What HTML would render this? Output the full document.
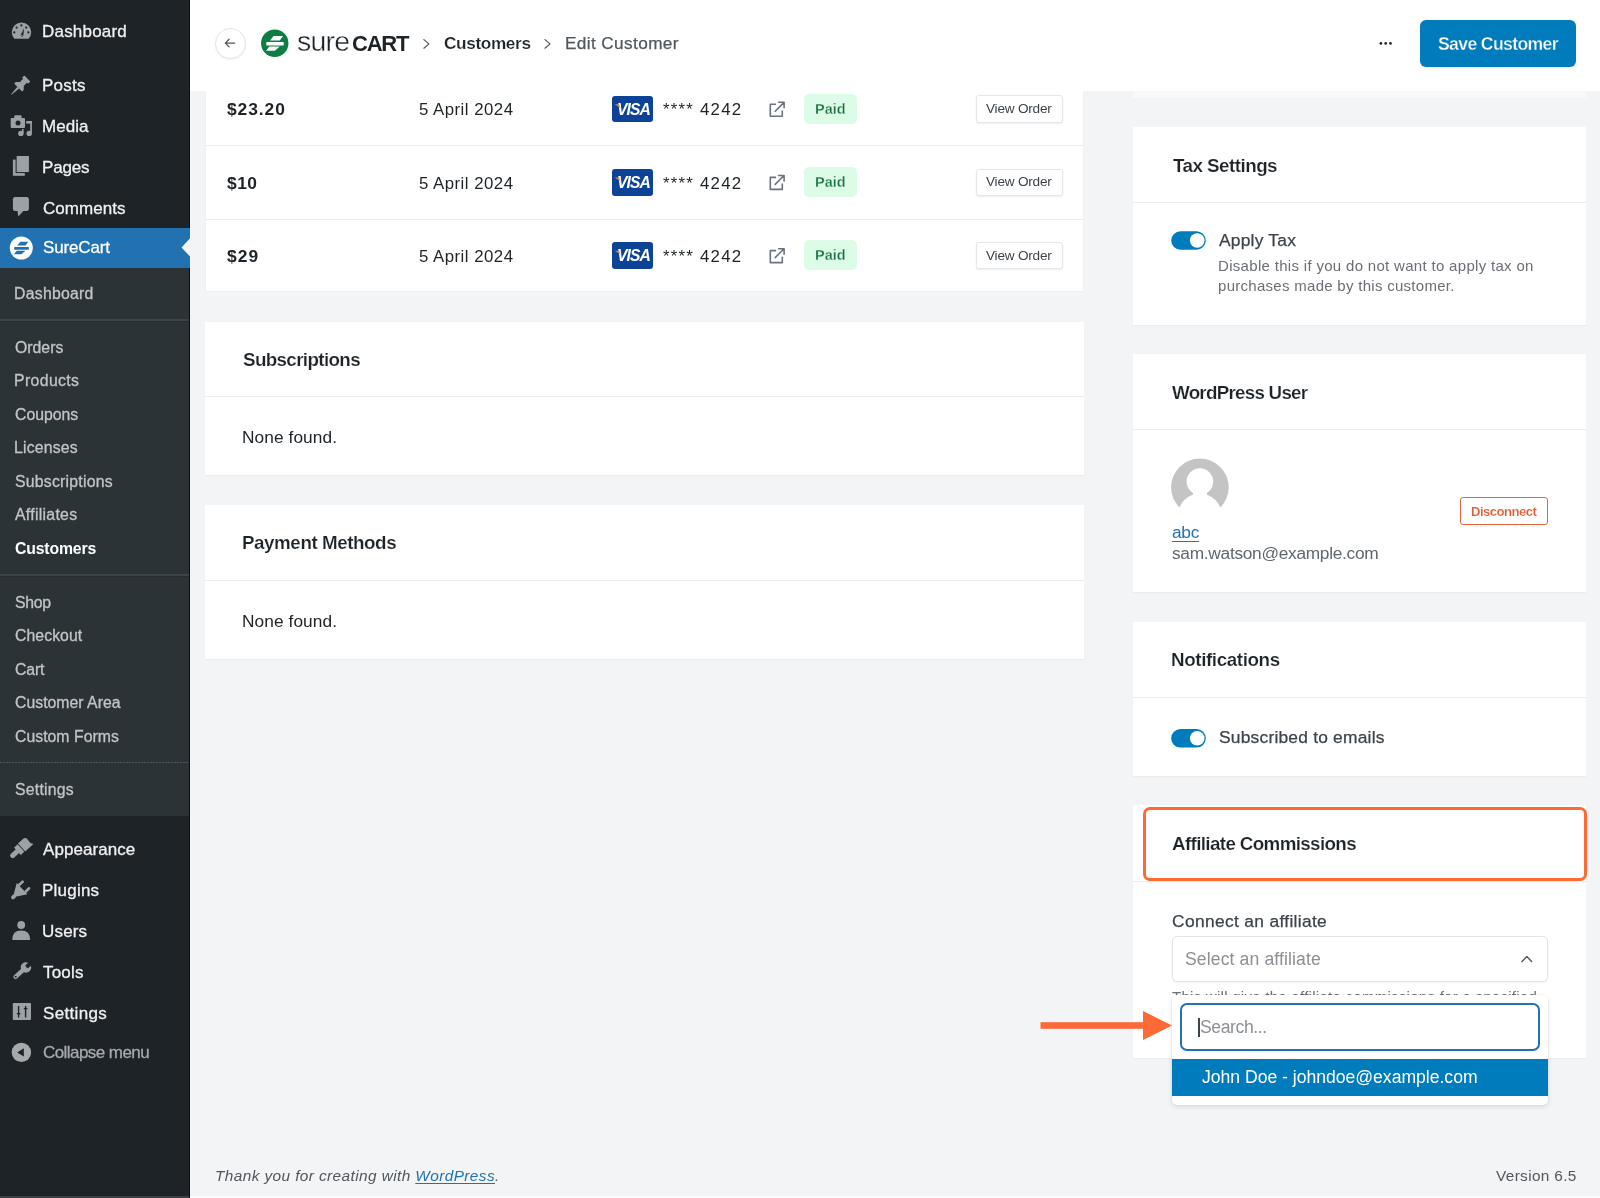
<!DOCTYPE html>
<html><head><meta charset="utf-8">
<style>
html,body{margin:0;padding:0}
body{width:1600px;height:1198px;overflow:hidden;background:#f3f4f6;position:relative;font-family:"Liberation Sans",sans-serif}
.b{position:absolute;box-sizing:border-box}
.t{position:absolute;white-space:nowrap;line-height:0;font-family:"Liberation Sans",sans-serif;will-change:transform}
.card{position:absolute;background:#fff;box-sizing:border-box;box-shadow:0 1px 1px rgba(0,0,0,0.03)}
.sep{position:absolute;height:1px;background:#ededee}
</style></head><body>
<!-- sidebar -->
<div class="b" style="left:0;top:0;width:189px;height:1198px;background:#1d2327"></div>
<div class="b" style="left:188.6px;top:0;width:1.6px;height:1198px;background:#0b0d0f"></div>
<div class="b" style="left:0;top:1196px;width:188.6px;height:2px;background:#3a4046"></div>
<div class="b" style="left:190.2px;top:1196px;width:1410px;height:2px;background:#fbfbfc"></div>

<div class="b" style="left:0;top:268px;width:189px;height:548px;background:#2c3336"></div>
<div class="b" style="left:0;top:319px;width:189px;height:2px;background:#3c434a"></div>
<div class="b" style="left:0;top:321px;width:189px;height:1px;background:#262b2f"></div>
<div class="b" style="left:0;top:574px;width:189px;height:2px;background:#3c434a"></div>
<div class="b" style="left:0;top:576px;width:189px;height:1px;background:#262b2f"></div>
<div class="b" style="left:0;top:762px;width:189px;height:1px;background:repeating-linear-gradient(90deg,#4f565c 0 1.6px,transparent 1.6px 3px)"></div>

<div class="b" style="left:0;top:228px;width:190.2px;height:40px;background:#2271b1"></div>
<!-- header -->
<div class="b" style="left:190px;top:0;width:1410px;height:91px;background:#fff"></div>

<!-- cards left -->
<div class="card" style="left:205px;top:91px;width:879px;height:201px;box-shadow:none;border-left:1px solid #eef0f2;border-right:1px solid #eef0f2;border-bottom:1px solid #eef0f2"></div>
<div class="sep" style="left:205px;top:145px;width:879px"></div>
<div class="sep" style="left:205px;top:219px;width:879px"></div>

<div class="card" style="left:205px;top:322px;width:879px;height:153px"></div>
<div class="sep" style="left:205px;top:396px;width:879px"></div>
<div class="card" style="left:205px;top:505px;width:879px;height:154px"></div>
<div class="sep" style="left:205px;top:580px;width:879px"></div>

<!-- cards right -->
<div class="b" style="left:1133px;top:91px;width:453px;height:7px;background:#f8f9fa"></div>
<div class="card" style="left:1133px;top:127px;width:453px;height:198px"></div>
<div class="sep" style="left:1133px;top:202px;width:453px"></div>
<div class="card" style="left:1133px;top:354px;width:453px;height:238px"></div>
<div class="sep" style="left:1133px;top:429px;width:453px"></div>
<div class="card" style="left:1133px;top:622px;width:453px;height:154px"></div>
<div class="sep" style="left:1133px;top:697px;width:453px"></div>
<div class="card" style="left:1133px;top:805px;width:453px;height:253px"></div>
<div class="sep" style="left:1133px;top:881px;width:453px"></div>

<!-- header elements -->
<div class="b" style="left:214.5px;top:27.5px;width:31px;height:31px;border-radius:50%;border:1px solid #e2e4e7;box-shadow:0 1px 2px rgba(0,0,0,.06);background:#fff"></div>
<div class="b" style="left:1420px;top:20px;width:156px;height:47px;border-radius:6px;background:#007cbd;box-shadow:0 1px 2px rgba(0,0,0,.08)"></div>

<!-- table elements -->
<div class="b" style="left:804px;top:93.7px;width:52.5px;height:30px;border-radius:5px;background:#dcfce7"></div>
<div class="b" style="left:976px;top:95.3px;width:86.5px;height:27.8px;border-radius:3px;border:1px solid #e6e7ea;background:#fff;box-shadow:0 1px 2px rgba(0,0,0,.08)"></div>
<div class="b" style="left:611.6px;top:96.1px;width:41.8px;height:26.4px;border-radius:3px;background:#0d4397"></div>
<div class="b" style="left:804px;top:167.0px;width:52.5px;height:30px;border-radius:5px;background:#dcfce7"></div>
<div class="b" style="left:976px;top:168.5px;width:86.5px;height:27.8px;border-radius:3px;border:1px solid #e6e7ea;background:#fff;box-shadow:0 1px 2px rgba(0,0,0,.08)"></div>
<div class="b" style="left:611.6px;top:169.2px;width:41.8px;height:26.4px;border-radius:3px;background:#0d4397"></div>
<div class="b" style="left:804px;top:240.3px;width:52.5px;height:30px;border-radius:5px;background:#dcfce7"></div>
<div class="b" style="left:976px;top:241.7px;width:86.5px;height:27.8px;border-radius:3px;border:1px solid #e6e7ea;background:#fff;box-shadow:0 1px 2px rgba(0,0,0,.08)"></div>
<div class="b" style="left:611.6px;top:242.3px;width:41.8px;height:26.4px;border-radius:3px;background:#0d4397"></div>

<!-- right column elements -->
<div class="b" style="left:1459.8px;top:497.4px;width:88px;height:28px;border-radius:3px;border:1px solid #e8643a;background:#fff"></div>
<div class="b" style="left:1143px;top:807px;width:444px;height:74px;border-radius:7px;border:3px solid #fd6a35"></div>
<div class="b" style="left:1172px;top:936px;width:375.5px;height:46px;border-radius:5px;border:1px solid #e2e4e7;background:#fff;box-shadow:0 1px 2px rgba(0,0,0,.05)"></div>

<div class="t" style="left:42.20px;top:31.60px;font-size:17px;color:#f0f0f1;font-weight:normal;font-style:normal;letter-spacing:0.199px;-webkit-text-stroke:0.3px currentColor;">Dashboard</div>
<div class="t" style="left:42.20px;top:85.60px;font-size:17px;color:#f0f0f1;font-weight:normal;font-style:normal;letter-spacing:0.246px;-webkit-text-stroke:0.3px currentColor;">Posts</div>
<div class="t" style="left:42.20px;top:126.60px;font-size:17px;color:#f0f0f1;font-weight:normal;font-style:normal;letter-spacing:0.038px;-webkit-text-stroke:0.3px currentColor;">Media</div>
<div class="t" style="left:42.20px;top:167.60px;font-size:17px;color:#f0f0f1;font-weight:normal;font-style:normal;letter-spacing:-0.176px;-webkit-text-stroke:0.3px currentColor;">Pages</div>
<div class="t" style="left:43.20px;top:208.60px;font-size:17px;color:#f0f0f1;font-weight:normal;font-style:normal;letter-spacing:0.045px;-webkit-text-stroke:0.3px currentColor;">Comments</div>
<div class="t" style="left:43.20px;top:247.60px;font-size:17px;color:#ffffff;font-weight:normal;font-style:normal;letter-spacing:-0.143px;-webkit-text-stroke:0.3px currentColor;">SureCart</div>
<div class="t" style="left:43.20px;top:849.60px;font-size:17px;color:#f0f0f1;font-weight:normal;font-style:normal;letter-spacing:0.064px;-webkit-text-stroke:0.3px currentColor;">Appearance</div>
<div class="t" style="left:42.20px;top:890.60px;font-size:17px;color:#f0f0f1;font-weight:normal;font-style:normal;letter-spacing:0.224px;-webkit-text-stroke:0.3px currentColor;">Plugins</div>
<div class="t" style="left:42.20px;top:931.60px;font-size:17px;color:#f0f0f1;font-weight:normal;font-style:normal;letter-spacing:0.177px;-webkit-text-stroke:0.3px currentColor;">Users</div>
<div class="t" style="left:43.20px;top:972.60px;font-size:17px;color:#f0f0f1;font-weight:normal;font-style:normal;letter-spacing:0.203px;-webkit-text-stroke:0.3px currentColor;">Tools</div>
<div class="t" style="left:43.20px;top:1013.60px;font-size:17px;color:#f0f0f1;font-weight:normal;font-style:normal;letter-spacing:0.325px;-webkit-text-stroke:0.3px currentColor;">Settings</div>
<div class="t" style="left:43.20px;top:1052.60px;font-size:17px;color:#a7aaad;font-weight:normal;font-style:normal;letter-spacing:-0.562px;-webkit-text-stroke:0.3px currentColor;">Collapse menu</div>
<div class="t" style="left:13.80px;top:293.60px;font-size:15.8px;color:#c3c4c7;font-weight:normal;font-style:normal;letter-spacing:0.263px;-webkit-text-stroke:0.3px currentColor;">Dashboard</div>
<div class="t" style="left:14.80px;top:347.60px;font-size:15.8px;color:#c3c4c7;font-weight:normal;font-style:normal;letter-spacing:0.004px;-webkit-text-stroke:0.3px currentColor;">Orders</div>
<div class="t" style="left:13.80px;top:380.60px;font-size:15.8px;color:#c3c4c7;font-weight:normal;font-style:normal;letter-spacing:0.380px;-webkit-text-stroke:0.3px currentColor;">Products</div>
<div class="t" style="left:14.80px;top:414.60px;font-size:15.8px;color:#c3c4c7;font-weight:normal;font-style:normal;letter-spacing:-0.023px;-webkit-text-stroke:0.3px currentColor;">Coupons</div>
<div class="t" style="left:13.80px;top:447.60px;font-size:15.8px;color:#c3c4c7;font-weight:normal;font-style:normal;letter-spacing:0.179px;-webkit-text-stroke:0.3px currentColor;">Licenses</div>
<div class="t" style="left:14.80px;top:481.60px;font-size:15.8px;color:#c3c4c7;font-weight:normal;font-style:normal;letter-spacing:0.231px;-webkit-text-stroke:0.3px currentColor;">Subscriptions</div>
<div class="t" style="left:14.80px;top:514.60px;font-size:15.8px;color:#c3c4c7;font-weight:normal;font-style:normal;letter-spacing:0.298px;-webkit-text-stroke:0.3px currentColor;">Affiliates</div>
<div class="t" style="left:14.80px;top:548.60px;font-size:15.8px;color:#ffffff;font-weight:bold;font-style:normal;letter-spacing:-0.166px;">Customers</div>
<div class="t" style="left:14.80px;top:602.60px;font-size:15.8px;color:#c3c4c7;font-weight:normal;font-style:normal;letter-spacing:-0.302px;-webkit-text-stroke:0.3px currentColor;">Shop</div>
<div class="t" style="left:14.80px;top:635.60px;font-size:15.8px;color:#c3c4c7;font-weight:normal;font-style:normal;letter-spacing:0.065px;-webkit-text-stroke:0.3px currentColor;">Checkout</div>
<div class="t" style="left:14.80px;top:669.60px;font-size:15.8px;color:#c3c4c7;font-weight:normal;font-style:normal;letter-spacing:-0.151px;-webkit-text-stroke:0.3px currentColor;">Cart</div>
<div class="t" style="left:14.80px;top:702.60px;font-size:15.8px;color:#c3c4c7;font-weight:normal;font-style:normal;letter-spacing:0.013px;-webkit-text-stroke:0.3px currentColor;">Customer Area</div>
<div class="t" style="left:14.80px;top:736.60px;font-size:15.8px;color:#c3c4c7;font-weight:normal;font-style:normal;letter-spacing:0.021px;-webkit-text-stroke:0.3px currentColor;">Custom Forms</div>
<div class="t" style="left:14.80px;top:789.60px;font-size:15.8px;color:#c3c4c7;font-weight:normal;font-style:normal;letter-spacing:0.231px;-webkit-text-stroke:0.3px currentColor;">Settings</div>
<div class="t" style="left:444.00px;top:43.10px;font-size:17.2px;color:#1d2327;font-weight:bold;font-style:normal;letter-spacing:-0.353px;-webkit-text-stroke:0.18px #fff;">Customers</div>
<div class="t" style="left:564.80px;top:43.10px;font-size:17.2px;color:#50575e;font-weight:normal;font-style:normal;letter-spacing:0.386px;-webkit-text-stroke:0.25px currentColor;">Edit Customer</div>
<div class="t" style="left:296.50px;top:41.10px;font-size:28.5px;color:#1d2327;font-weight:normal;font-style:normal;letter-spacing:-0.797px;-webkit-text-stroke:0.4px #fff;">sure</div>
<div class="t" style="left:352.00px;top:43.60px;font-size:22px;color:#1d2327;font-weight:bold;font-style:normal;letter-spacing:-1.221px;">CART</div>
<div class="t" style="left:1438.00px;top:44.10px;font-size:17.6px;color:#ffffff;font-weight:bold;font-style:normal;letter-spacing:-0.629px;-webkit-text-stroke:0.3px #007cbd;">Save Customer</div>
<div class="t" style="left:226.50px;top:109.10px;font-size:17.4px;color:#1d2327;font-weight:bold;font-style:normal;letter-spacing:0.936px;">$23.20</div>
<div class="t" style="left:419.40px;top:109.60px;font-size:16.8px;color:#1d2327;font-weight:normal;font-style:normal;letter-spacing:0.488px;">5 April 2024</div>
<div class="t" style="left:663.30px;top:109.60px;font-size:16.8px;color:#1d2327;font-weight:normal;font-style:normal;letter-spacing:1.240px;">**** 4242</div>
<div class="t" style="left:815.00px;top:109.10px;font-size:14.5px;color:#15703d;font-weight:bold;font-style:normal;letter-spacing:-0.021px;-webkit-text-stroke:0.3px #dcfce7;">Paid</div>
<div class="t" style="left:985.90px;top:108.60px;font-size:13.6px;color:#3c434a;font-weight:normal;font-style:normal;letter-spacing:-0.213px;">View Order</div>
<div class="t" style="left:226.50px;top:183.10px;font-size:17.4px;color:#1d2327;font-weight:bold;font-style:normal;letter-spacing:0.478px;">$10</div>
<div class="t" style="left:419.40px;top:183.60px;font-size:16.8px;color:#1d2327;font-weight:normal;font-style:normal;letter-spacing:0.488px;">5 April 2024</div>
<div class="t" style="left:663.30px;top:183.60px;font-size:16.8px;color:#1d2327;font-weight:normal;font-style:normal;letter-spacing:1.240px;">**** 4242</div>
<div class="t" style="left:815.00px;top:182.10px;font-size:14.5px;color:#15703d;font-weight:bold;font-style:normal;letter-spacing:-0.021px;-webkit-text-stroke:0.3px #dcfce7;">Paid</div>
<div class="t" style="left:985.90px;top:181.60px;font-size:13.6px;color:#3c434a;font-weight:normal;font-style:normal;letter-spacing:-0.213px;">View Order</div>
<div class="t" style="left:226.50px;top:256.10px;font-size:17.4px;color:#1d2327;font-weight:bold;font-style:normal;letter-spacing:1.078px;">$29</div>
<div class="t" style="left:419.40px;top:256.60px;font-size:16.8px;color:#1d2327;font-weight:normal;font-style:normal;letter-spacing:0.488px;">5 April 2024</div>
<div class="t" style="left:663.30px;top:256.60px;font-size:16.8px;color:#1d2327;font-weight:normal;font-style:normal;letter-spacing:1.240px;">**** 4242</div>
<div class="t" style="left:815.00px;top:255.10px;font-size:14.5px;color:#15703d;font-weight:bold;font-style:normal;letter-spacing:-0.021px;-webkit-text-stroke:0.3px #dcfce7;">Paid</div>
<div class="t" style="left:985.90px;top:255.60px;font-size:13.6px;color:#3c434a;font-weight:normal;font-style:normal;letter-spacing:-0.213px;">View Order</div>
<div class="t" style="left:243.10px;top:359.60px;font-size:18.8px;color:#1d2327;font-weight:bold;font-style:normal;letter-spacing:-0.636px;-webkit-text-stroke:0.18px #fff;">Subscriptions</div>
<div class="t" style="left:242.10px;top:437.10px;font-size:17.3px;color:#1d2327;font-weight:normal;font-style:normal;letter-spacing:0.079px;">None found.</div>
<div class="t" style="left:242.10px;top:542.60px;font-size:18.8px;color:#1d2327;font-weight:bold;font-style:normal;letter-spacing:-0.437px;-webkit-text-stroke:0.18px #fff;">Payment Methods</div>
<div class="t" style="left:242.10px;top:621.10px;font-size:17.3px;color:#1d2327;font-weight:normal;font-style:normal;letter-spacing:0.079px;">None found.</div>
<div class="t" style="left:1172.50px;top:165.60px;font-size:18.8px;color:#1d2327;font-weight:bold;font-style:normal;letter-spacing:-0.521px;-webkit-text-stroke:0.18px #fff;">Tax Settings</div>
<div class="t" style="left:1218.75px;top:240.10px;font-size:17.4px;color:#3c434a;font-weight:normal;font-style:normal;letter-spacing:0.225px;-webkit-text-stroke:0.25px currentColor;">Apply Tax</div>
<div class="t" style="left:1217.75px;top:265.60px;font-size:15px;color:#6b6f75;font-weight:normal;font-style:normal;letter-spacing:0.313px;">Disable this if you do not want to apply tax on</div>
<div class="t" style="left:1217.90px;top:285.60px;font-size:15px;color:#6b6f75;font-weight:normal;font-style:normal;letter-spacing:0.286px;">purchases made by this customer.</div>
<div class="t" style="left:1172.00px;top:392.60px;font-size:18.8px;color:#1d2327;font-weight:bold;font-style:normal;letter-spacing:-0.745px;-webkit-text-stroke:0.18px #fff;">WordPress User</div>
<div class="t" style="left:1172.00px;top:532.10px;font-size:17.3px;color:#2271b1;font-weight:normal;font-style:normal;letter-spacing:-0.261px;text-decoration:underline;text-underline-offset:3px;">abc</div>
<div class="t" style="left:1172.00px;top:553.10px;font-size:17.3px;color:#5f666d;font-weight:normal;font-style:normal;letter-spacing:-0.277px;">sam.watson@example.com</div>
<div class="t" style="left:1470.60px;top:511.60px;font-size:13.2px;color:#e25a30;font-weight:bold;font-style:normal;letter-spacing:-0.588px;-webkit-text-stroke:0.18px #fff;">Disconnect</div>
<div class="t" style="left:1171.30px;top:659.60px;font-size:18.8px;color:#1d2327;font-weight:bold;font-style:normal;letter-spacing:-0.382px;-webkit-text-stroke:0.18px #fff;">Notifications</div>
<div class="t" style="left:1218.50px;top:737.10px;font-size:17.4px;color:#3c434a;font-weight:normal;font-style:normal;letter-spacing:0.209px;-webkit-text-stroke:0.25px currentColor;">Subscribed to emails</div>
<div class="t" style="left:1172.20px;top:843.60px;font-size:18.8px;color:#1d2327;font-weight:bold;font-style:normal;letter-spacing:-0.630px;-webkit-text-stroke:0.18px #fff;">Affiliate Commissions</div>
<div class="t" style="left:1172.20px;top:921.10px;font-size:17.4px;color:#3c434a;font-weight:normal;font-style:normal;letter-spacing:0.327px;-webkit-text-stroke:0.25px currentColor;">Connect an affiliate</div>
<div class="t" style="left:1185.00px;top:959.10px;font-size:17.6px;color:#8c8f94;font-weight:normal;font-style:normal;letter-spacing:0.117px;">Select an affiliate</div>
<div class="t" style="left:1172.00px;top:996.60px;font-size:15px;color:#6b6f75;font-weight:normal;font-style:normal;letter-spacing:0.272px;">This will give the affiliate commissions for a specified</div>
<div class="t" style="left:214.60px;top:1175.60px;font-size:15.4px;color:#50575e;font-weight:normal;font-style:italic;letter-spacing:0.401px;">Thank you for creating with <span style="color:#2271b1;text-decoration:underline;text-underline-offset:2px">WordPress</span>.</div>
<div class="t" style="left:616.80px;top:109.60px;font-size:15.7px;color:#ffffff;font-weight:bold;font-style:italic;letter-spacing:-0.962px;">VISA</div>
<div class="t" style="left:616.80px;top:182.60px;font-size:15.7px;color:#ffffff;font-weight:bold;font-style:italic;letter-spacing:-0.962px;">VISA</div>
<div class="t" style="left:616.80px;top:255.60px;font-size:15.7px;color:#ffffff;font-weight:bold;font-style:italic;letter-spacing:-0.962px;">VISA</div>
<div class="t" style="left:1495.75px;top:1175.60px;font-size:15.4px;color:#50575e;font-weight:normal;font-style:normal;letter-spacing:0.340px;">Version 6.5</div>

<!-- dropdown overlay (after texts so it covers helper text) -->
<div class="b" style="left:1172px;top:994.5px;width:375.5px;height:110px;border-radius:5px;background:#fff;box-shadow:0 2px 5px rgba(0,0,0,.10),0 0 0 1px rgba(0,0,0,.03)"></div>
<div class="b" style="left:1180px;top:1003px;width:360px;height:47.6px;border-radius:7px;border:2px solid #2271b1;background:#fff"></div>
<div class="b" style="left:1172px;top:1059px;width:375.5px;height:36.5px;background:#007cbd"></div>
<div class="b" style="left:1198.2px;top:1017.5px;width:1.6px;height:19px;background:#3c434a"></div>
<div class="t" style="left:1199.50px;top:1027.10px;font-size:17.6px;color:#8c8f94;font-weight:normal;font-style:normal;letter-spacing:-0.403px;">Search...</div>
<div class="t" style="left:1201.70px;top:1077.10px;font-size:17.6px;color:#ffffff;font-weight:normal;font-style:normal;letter-spacing:-0.017px;">John Doe - johndoe@example.com</div>

<!-- icons overlay -->
<svg class="b" style="left:0;top:0" width="1600" height="1198" viewBox="0 0 1600 1198">
<path d="M14.49 38.8 A9.7 9.7 0 1 1 28.51 38.8 Z" fill="#9ca1a7"/>
<circle cx="21.4" cy="25.4" r="1.1" fill="#1d2327"/>
<circle cx="16.6" cy="27.6" r="1.1" fill="#1d2327"/>
<circle cx="26.2" cy="27.6" r="1.1" fill="#1d2327"/>
<circle cx="14.3" cy="32.4" r="1.1" fill="#1d2327"/>
<circle cx="28.4" cy="32.4" r="1.1" fill="#1d2327"/>
<path d="M24.0 28.3 L20.6 35.3 Q20.9 37.2 22.6 36.6 Q23.6 35.9 23.4 35.0 Z" fill="#1d2327"/>
<circle cx="21.9" cy="35.6" r="0.8" fill="#9ca1a7"/>
<g transform="translate(19.3 86.5) rotate(45)" fill="#9ca1a7"><rect x="-4.3" y="-11.4" width="8.6" height="3.3" rx="0.8"/><rect x="-2.7" y="-8.6" width="5.4" height="5.4"/><path d="M-2.7 -3.6 H2.7 L5.6 -0.6 V1.6 H-5.6 V-0.6 Z"/><path d="M-1.3 1.5 H1.3 L0.25 11.3 H-0.25 Z"/></g>
<rect x="10.7" y="118" width="14.3" height="10" rx="1" fill="#9ca1a7"/>
<rect x="14.3" y="115.3" width="7.2" height="4" rx="1" fill="#9ca1a7"/>
<circle cx="18" cy="122.9" r="2.5" fill="#1d2327"/>
<circle cx="20.9" cy="133.4" r="2.7" fill="#9ca1a7"/>
<circle cx="29.2" cy="133.4" r="2.7" fill="#9ca1a7"/>
<rect x="22.0" y="129" width="1.6" height="4.5" fill="#9ca1a7"/>
<rect x="30.2" y="121" width="1.7" height="12.4" fill="#9ca1a7"/>
<rect x="26.2" y="121" width="5.7" height="2.6" fill="#9ca1a7"/>
<rect x="12.9" y="159.6" width="11.9" height="16.2" fill="#9ca1a7"/>
<rect x="16.1" y="155.5" width="13.3" height="17.1" fill="#9ca1a7" stroke="#1d2327" stroke-width="1"/>
<rect x="12.9" y="197.1" width="16" height="13.9" rx="2.2" fill="#9ca1a7"/>
<path d="M17.4 210.5 L18.3 216.4 L23.8 210.5 Z" fill="#9ca1a7"/>
<circle cx="21.3" cy="248" r="11.5" fill="#fff"/>
<path d="M20.33 241.87 L28.23 241.87 L25.54 245.57 L17.31 245.57 Z M14.33 246.99 L28.69 246.99 L28.90 248.38 L28.69 249.76 L14.33 249.76 L14.12 248.38 Z M16.73 250.77 L25.54 250.77 L21.34 254.30 L13.96 254.30 Z" fill="#2271b1"/>
<g transform="translate(11.2 856.8) rotate(-42)" fill="#9ca1a7"><rect x="-0.6" y="-2.5" width="10.5" height="5" rx="2.5"/><rect x="8.2" y="-5.0" width="5.0" height="10.0" rx="0.6"/><path d="M14.0 -5.4 H21.5 Q24.6 -4.2 23.6 -0.6 Q22.8 2.6 25.0 5.4 H14.0 Z"/></g>
<g transform="translate(13.0 897.4) rotate(-44)" fill="#9ca1a7"><rect x="-1.9" y="-1.9" width="6" height="3.8" rx="1.9"/><path d="M3.2 -2.0 L12.6 -7.7 V7.7 L3.2 2.0 Z"/><rect x="12.0" y="-6.0" width="7.2" height="2.7" rx="1.35"/><rect x="12.0" y="3.3" width="7.2" height="2.7" rx="1.35"/></g>
<circle cx="21.2" cy="925.0" r="3.9" fill="#9ca1a7"/>
<path d="M12.3 940 Q12.3 930.6 21.2 930.6 Q30.1 930.6 30.1 940 Z" fill="#9ca1a7"/>
<g transform="translate(21.8 971.2) rotate(48)" fill="#9ca1a7"><rect x="-2.2" y="-3" width="4.4" height="13.6" rx="2.2"/><path d="M-5.2 -5.6 A5.2 5.2 0 0 1 -2.0 -10.4 V-6.6 Q0 -5.2 2.0 -6.6 V-10.4 A5.2 5.2 0 0 1 5.2 -5.6 A5.2 5.2 0 0 1 2.2 -0.9 H-2.2 A5.2 5.2 0 0 1 -5.2 -5.6 Z"/><circle cx="0" cy="8.2" r="1.0" fill="#1d2327"/></g>
<rect x="12.8" y="1003" width="18.2" height="17" rx="1" fill="#9ca1a7"/>
<path d="M18.6 1006 V1017.5 M16.8 1013.6 H20.4 M25.6 1006 V1017.5 M23.8 1008.6 H27.4" stroke="#1d2327" stroke-width="1.4" fill="none"/>
<circle cx="21.4" cy="1052.4" r="9.7" fill="#a7aaad"/>
<path d="M17.2 1052.4 L23.8 1048.3 V1056.5 Z" fill="#1d2327"/>
<path d="M190 238.3 L181.5 247.4 L190 256.5 Z" fill="#f3f4f6"/>
<path d="M225.4 43.1 H234.6 M229.1 39.3 L225.3 43.1 L229.1 46.9" stroke="#50575e" stroke-width="1.3" fill="none" stroke-linecap="round" stroke-linejoin="round"/>
<circle cx="274.75" cy="43.3" r="13.7" fill="#0d7d42"/>
<path d="M273.60 36.00 L283.00 36.00 L279.80 40.40 L270.00 40.40 Z M266.45 42.10 L283.55 42.10 L283.80 43.75 L283.55 45.40 L266.45 45.40 L266.20 43.75 Z M269.30 46.60 L279.80 46.60 L274.80 50.80 L266.00 50.80 Z" fill="#fff"/>
<path d="M423.9 39.6 L428.9 43.9 L423.9 48.2" stroke="#50575e" stroke-width="1.25" fill="none" stroke-linecap="round" stroke-linejoin="round"/>
<path d="M545.0 39.6 L550.0 43.9 L545.0 48.2" stroke="#50575e" stroke-width="1.25" fill="none" stroke-linecap="round" stroke-linejoin="round"/>
<circle cx="1380.9" cy="43.4" r="1.35" fill="#1d2327"/>
<circle cx="1385.7" cy="43.4" r="1.35" fill="#1d2327"/>
<circle cx="1390.5" cy="43.4" r="1.35" fill="#1d2327"/>
<path d="M614.6 104.3 L619.3 104.3 L620.8 108.3 Z" fill="#f0883e" opacity="0.85"/>
<path d="M776 104.2 H770.3 V116.2 H782.3 V110.4" stroke="#6b7280" stroke-width="1.6" fill="none" stroke-linejoin="round"/>
<path d="M775.2 111.2 L783.8 102.6 M778.6 102.3 H784.1 V107.8" stroke="#6b7280" stroke-width="1.6" fill="none" stroke-linecap="round" stroke-linejoin="round"/>
<path d="M614.6 177.5 L619.3 177.5 L620.8 181.5 Z" fill="#f0883e" opacity="0.85"/>
<path d="M776 177.4 H770.3 V189.4 H782.3 V183.6" stroke="#6b7280" stroke-width="1.6" fill="none" stroke-linejoin="round"/>
<path d="M775.2 184.4 L783.8 175.8 M778.6 175.5 H784.1 V181.0" stroke="#6b7280" stroke-width="1.6" fill="none" stroke-linecap="round" stroke-linejoin="round"/>
<path d="M614.6 250.7 L619.3 250.7 L620.8 254.7 Z" fill="#f0883e" opacity="0.85"/>
<path d="M776 250.6 H770.3 V262.6 H782.3 V256.8" stroke="#6b7280" stroke-width="1.6" fill="none" stroke-linejoin="round"/>
<path d="M775.2 257.6 L783.8 249.0 M778.6 248.7 H784.1 V254.2" stroke="#6b7280" stroke-width="1.6" fill="none" stroke-linecap="round" stroke-linejoin="round"/>
<rect x="1171.2" y="231.2" width="34.6" height="18.6" rx="9.3" fill="#007cbd"/>
<circle cx="1197.2" cy="240.5" r="7.3" fill="#fff"/>
<rect x="1171.2" y="729.0" width="34.6" height="18.6" rx="9.3" fill="#007cbd"/>
<circle cx="1197.2" cy="738.3" r="7.3" fill="#fff"/>
<defs><mask id="avm" maskUnits="userSpaceOnUse" x="1160" y="450" width="80" height="80"><rect x="1160" y="450" width="80" height="80" fill="#fff"/><circle cx="1199.9" cy="481.6" r="13.3" fill="#000"/><circle cx="1199.9" cy="515.5" r="22" fill="#000"/><rect x="1193" y="490" width="14" height="6" fill="#000"/></mask></defs>
<circle cx="1199.9" cy="487.3" r="28.8" fill="#c4c4c4" mask="url(#avm)"/>
<path d="M1522 961.6 L1526.8 956.6 L1531.6 961.6" stroke="#50575e" stroke-width="1.4" fill="none" stroke-linecap="round" stroke-linejoin="round"/>
<rect x="1040.5" y="1022.2" width="103" height="6.6" fill="#fd6a35"/>
<path d="M1143 1011 L1172 1025.5 L1143 1040 Z" fill="#fd6a35"/>
</svg>
</body></html>
